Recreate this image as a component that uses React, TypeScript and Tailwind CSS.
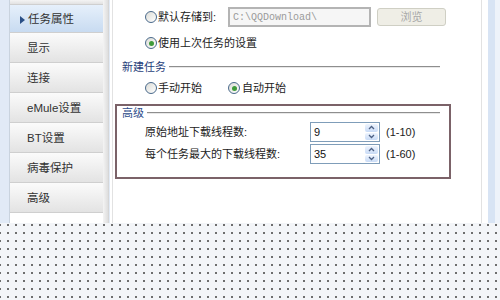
import React from 'react';

const menu = ['任务属性', '显示', '连接', 'eMule设置', 'BT设置', '病毒保护', '高级'];

const Radio = ({ checked }: { checked?: boolean }) => (
    <span className="w-[12px] h-[12px] rounded-full border border-[#4a6a8c] bg-gradient-to-br from-[#dcdcd6] to-white flex items-center justify-center shrink-0">
        {checked && <span className="w-[5px] h-[5px] rounded-full bg-[#3f9b3a]" />}
    </span>
);

const Spin = ({ value }: { value: string }) => (
    <div className="w-[70px] h-[20px] border border-[#7f9db9] bg-white flex items-center">
        <span className="flex-1 pl-[3px] text-[11px] text-[#111] font-['Liberation_Sans',sans-serif]">{value}</span>
        <div className="w-[13px] h-full flex flex-col mr-[1px] py-[1px] gap-[1px]">
            <div className="flex-1 bg-gradient-to-b from-[#eef4fd] to-[#c9dbf6] rounded-[2px] flex items-center justify-center">
                <svg width="7" height="5" viewBox="0 0 7 5"><path d="M1 4 L3.5 1.5 L6 4" fill="none" stroke="#4d6185" strokeWidth="1.3" /></svg>
            </div>
            <div className="flex-1 bg-gradient-to-b from-[#eef4fd] to-[#c9dbf6] rounded-[2px] flex items-center justify-center">
                <svg width="7" height="5" viewBox="0 0 7 5"><path d="M1 1 L3.5 3.5 L6 1" fill="none" stroke="#4d6185" strokeWidth="1.3" /></svg>
            </div>
        </div>
    </div>
);

export default function App() {
    return (
        <div className="w-[500px] h-[300px] overflow-hidden bg-white text-[11px] text-[#222] font-['Liberation_Sans','Noto_Sans_CJK_SC',sans-serif]">
            <div className="flex h-[223px]">
                {/* sidebar */}
                <div className="w-[110px] h-full flex bg-[#e1eaf6] pl-[9px]">
                    <div className="w-[94px] h-full bg-white flex flex-col border-l border-[#c9d3de]">
                        <div className="h-[5px] bg-gradient-to-b from-[#f4f4f4] to-[#e2e2e2] border-b border-[#cfcfcf]" />
                        {menu.map((m, i) => (
                            <div
                                key={m}
                                className={`${i === 0 ? 'h-[28px] bg-gradient-to-b from-[#e6f0fb] to-[#c8dbf1]' : 'h-[30px] bg-gradient-to-b from-[#fbfbfb] to-[#e3e3e3]'} border-b border-[#cfcfcf] flex items-center pt-[3px] ${i === 0 ? 'pl-[10px]' : 'pl-[17px]'}`}
                            >
                                {i === 0 && (
                                    <svg width="5" height="8" viewBox="0 0 5 8" className="mr-[3px]"><path d="M0 0 L5 4 L0 8 Z" fill="#2a4f86" /></svg>
                                )}
                                <span className="text-[11.5px] text-[#333]">{m}</span>
                            </div>
                        ))}
                        <div className="flex-1 bg-white" />
                    </div>
                    <div className="w-[6px] h-full bg-gradient-to-r from-[#f4f4f4] to-[#dedede] border-r border-[#d6d6d6]" />
                </div>

                {/* content */}
                <div className="ml-[2px] w-[370px] h-full border-l border-r border-[#e2e2e2] bg-white flex flex-col">
                    <div className="mt-[7px] h-[20px] flex items-center pl-[32px]">
                        <Radio />
                        <span className="w-[71px] pl-[1px]">默认存储到:</span>
                        <div className="w-[143px] h-[20px] border-2 border-[#b4b4b4] bg-[#f6f6f6] flex items-center pl-[3px]">
                            <span className="font-['Liberation_Mono',monospace] text-[10px] text-[#9a9a9a]">C:\QQDownload\</span>
                        </div>
                        <div className="ml-[6px] w-[69px] h-[18px] rounded-[3px] border border-[#cfcfc4] bg-[#efeee6] flex items-center justify-center text-[#a8a8a8]">浏览</div>
                    </div>
                    <div className="mt-[6px] h-[20px] flex items-center pl-[32px]">
                        <Radio checked />
                        <span className="pl-[1px]">使用上次任务的设置</span>
                    </div>
                    <div className="mt-[6px] h-[16px] flex items-center pl-[9px] pr-[41px]">
                        <span className="text-[#1f3e7a]">新建任务</span>
                        <div className="flex-1 ml-[3px] h-[2px] border-t border-[#8e8e8e] border-b border-b-[#e8e8e8]" />
                    </div>
                    <div className="mt-[3px] h-[20px] flex items-center pl-[32px]">
                        <Radio />
                        <span className="w-[71px] pl-[1px]">手动开始</span>
                        <Radio checked />
                        <span className="pl-[2px]">自动开始</span>
                    </div>
                    <div className="mt-[6px] ml-[2px] w-[336px] h-[75px] border-2 border-[#7b6268] flex flex-col">
                        <div className="h-[14px] flex items-center pl-[5px] pr-[9px]">
                            <span className="text-[#2d4c8a]">高级</span>
                            <div className="flex-1 ml-[3px] h-[2px] border-t border-[#8e8e8e] border-b border-b-[#e8e8e8]" />
                        </div>
                        <div className="mt-[2px] h-[20px] flex items-center pl-[28px]">
                            <span className="w-[165px]">原始地址下载线程数:</span>
                            <Spin value="9" />
                            <span className="ml-[6px]">(1-10)</span>
                        </div>
                        <div className="mt-[2px] h-[20px] flex items-center pl-[28px]">
                            <span className="w-[165px]">每个任务最大的下载线程数:</span>
                            <Spin value="35" />
                            <span className="ml-[6px]">(1-60)</span>
                        </div>
                    </div>
                </div>

                {/* right edge */}
                <div className="w-[6px] h-full bg-white" />
                <div className="w-[7px] h-full bg-[#d8e4f4]" />
                <div className="w-[5px] h-full bg-[#eef3fa]" />
            </div>

            <div className="h-[77px] bg-[#f3f5f8] bg-[radial-gradient(circle,#6e6e6e_0.9px,transparent_1.3px)] bg-[length:8px_8px] bg-[position:4px_-2px]" />
        </div>
    );
}
